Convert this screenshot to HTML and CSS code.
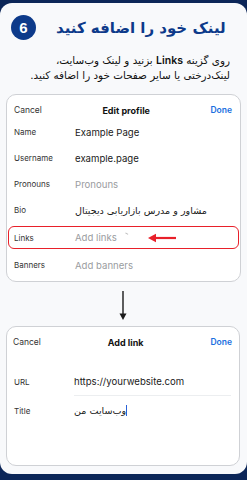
FILE: index.html
```html
<!DOCTYPE html>
<html lang="fa">
<head>
<meta charset="utf-8">
<link rel="stylesheet" href="styles.css">
</head>
<body>
<div class="frame">
  <div class="head">
    <div class="badge">6</div>
    <h1 class="title" dir="rtl">لینک خود را اضافه کنید</h1>
  </div>
  <p class="intro" dir="rtl">روی گزینه <b>Links</b> بزنید و لینک وب‌سایت،<br>لینک‌درختی یا سایر صفحات خود را اضافه کنید.</p>

  <div class="card card-profile">
    <div class="bar">
      <span class="cancel">Cancel</span>
      <span class="bar-title">Edit profile</span>
      <span class="done">Done</span>
    </div>
    <div class="row"><span class="label">Name</span><span class="value">Example Page</span></div>
    <div class="row"><span class="label">Username</span><span class="value">example.page</span></div>
    <div class="row"><span class="label">Pronouns</span><span class="value muted">Pronouns</span></div>
    <div class="row"><span class="label">Bio</span><span class="value fa" dir="rtl">مشاور و مدرس بازاریابی دیجیتال</span></div>
    <div class="row row-hl">
      <span class="label">Links</span><span class="value muted">Add links</span>
      <span class="tick"></span>
      <svg class="red-arrow" width="30" height="10" viewBox="0 0 30 10"><path d="M29 5H8" stroke="#e8202a" stroke-width="2.2"/><path d="M1 5l8-4.2v8.4z" fill="#e8202a"/></svg>
    </div>
    <div class="row"><span class="label">Banners</span><span class="value muted">Add banners</span></div>
  </div>

  <div class="down">
    <svg width="10" height="30" viewBox="0 0 10 30"><path d="M5 0v24" stroke="#1a1a1a" stroke-width="1.4"/><path d="M1.5 22.5L5 29l3.5-6.5z" fill="#1a1a1a"/></svg>
  </div>

  <div class="card card-link">
    <div class="bar">
      <span class="cancel">Cancel</span>
      <span class="bar-title">Add link</span>
      <span class="done">Done</span>
    </div>
    <div class="lrow lrow-url"><span class="label">URL</span><span class="value">https://yourwebsite.com</span></div>
    <div class="lrow"><span class="label">Title</span><span class="value"><span class="caret"></span><span class="fa" dir="rtl">وب‌سایت من</span></span></div>
  </div>
</div>
</body>
</html>
```

FILE: styles.css
```css
* { box-sizing: border-box; }
html, body { margin: 0; padding: 0; }
body {
  width: 247px;
  height: 480px;
  background: #0c2658;
  font-family: Inter, "Noto Sans", "DejaVu Sans", sans-serif;
  overflow: hidden;
}
.frame {
  margin-top: 3px;
  height: 471px;
  background: #f8f9fb;
  border-radius: 12px;
  padding: 12px 6px 0 6px;
}
.head {
  display: flex;
  align-items: center;
  padding-left: 5px;
  height: 25px;
}
.badge {
  width: 25px;
  height: 25px;
  border-radius: 50%;
  background: #0d3a8a;
  color: #fff;
  font-family: "Liberation Sans", Arial, sans-serif;
  font-weight: 700;
  font-size: 15px;
  display: flex;
  align-items: center;
  justify-content: center;
  flex: none;
}
.title {
  margin: 0 0 0 20px;
  font-size: 15px;
  font-weight: 700;
  color: #0d3a8a;
  font-family: "DejaVu Sans", sans-serif;
  white-space: nowrap;
}
.intro {
  margin: 13px 11px 0 0;
  font-size: 10.4px;
  line-height: 15px;
  color: #111;
  text-align: right;
  font-family: "DejaVu Sans", sans-serif;
}
.intro b { font-family: Inter, sans-serif; font-weight: 600; font-size: 10.5px; }
.card {
  background: #fff;
  border: 1px solid #cfd1d5;
  border-radius: 10px;
}
.card-profile {
  margin-top: 11px;
  height: 188px;
  padding: 0 1px;
}
.bar {
  display: flex;
  align-items: center;
  justify-content: space-between;
  height: 24px;
  padding: 6px 7px 0 6px;
  font-size: 8.5px;
}
.cancel { color: #333; }
.bar-title { font-weight: 700; color: #111; font-size: 9px; }
.done { color: #1a6fe0; font-weight: 600; }
.row {
  position: relative;
  display: flex;
  align-items: center;
  height: 26px;
  padding-left: 6px;
  font-size: 8.5px;
}
.label { width: 61px; color: #333; flex: none; font-size: 8px; }
.value { color: #1a1a1a; font-size: 9.6px; }
.muted { color: #9a9ca0; }
.fa { font-family: "DejaVu Sans", sans-serif; font-size: 9.6px; }
.row-hl {
  margin: 3px 0;
  height: 23px;
  border: 1px solid #e8202a;
  border-radius: 6px;
  padding-left: 5px;
}
.tick {
  position: absolute;
  left: 116px;
  top: 6px;
  width: 3px;
  height: 2px;
  border-top: 1px solid #bbb;
  transform: rotate(30deg);
}
.red-arrow {
  position: absolute;
  left: 138px;
  top: 6px;
}
.down {
  display: flex;
  justify-content: center;
  padding: 9px 0 5px 0;
}
.down svg { margin-left: -1px; }
.card-link {
  height: 140px;
  margin-right: 1px;
}
.card-link .bar { padding-top: 3px; height: 27px; }
.lrow {
  display: flex;
  align-items: center;
  height: 29px;
  padding-left: 7px;
  font-size: 8.5px;
}
.lrow-url { margin-top: 13px; position: relative; }
.lrow-url::after {
  content: "";
  position: absolute;
  left: 67px;
  right: 8px;
  bottom: 0;
  border-bottom: 1px solid #eceef0;
}
.lrow .label { width: 60px; }
.lrow .value { display: flex; align-items: center; }
.caret {
  display: inline-block;
  width: 1px;
  height: 11px;
  background: #2a62d8;
  order: 2;
}
```
